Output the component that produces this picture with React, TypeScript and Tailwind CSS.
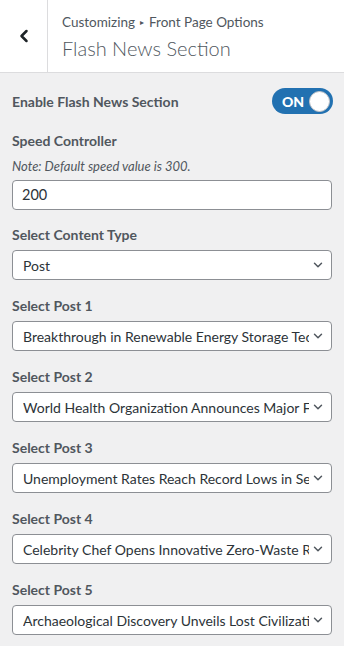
import { ChevronDown, ChevronLeft } from "lucide-react";

const posts = [
  "Breakthrough in Renewable Energy Storage Technology",
  "World Health Organization Announces Major Funding",
  "Unemployment Rates Reach Record Lows in Several States",
  "Celebrity Chef Opens Innovative Zero-Waste Restaurant",
  "Archaeological Discovery Unveils Lost Civilization",
];

const Label = ({ children }: { children: React.ReactNode }) => (
  <div className="text-[14px] font-bold text-[#50575e] leading-5 mb-[5px]">{children}</div>
);

const Select = ({ value }: { value: string }) => (
  <div className="flex items-center h-[30px] bg-white border border-[#8c8f94] rounded-[4px] pl-[10px] pr-[6px]">
    <span className="flex-1 text-[14px] text-[#2c3338] whitespace-nowrap overflow-hidden">{value}</span>
    <ChevronDown className="w-[14px] h-[14px] text-[#50575e] shrink-0 ml-[2px]" strokeWidth={2.5} />
  </div>
);

export default function App() {
  return (
    <div className="w-[344px] h-[646px] bg-[#f0f0f1] font-['Lato',sans-serif] overflow-hidden">
      <div className="flex h-[73px] bg-white border-b border-[#dcdcde]">
        <div className="w-[48px] border-r border-[#dcdcde] flex items-center justify-center">
          <ChevronLeft className="w-[20px] h-[20px] text-[#1d2327]" strokeWidth={3} />
        </div>
        <div className="pl-[14px] pt-[12px]">
          <div className="text-[13.5px] text-[#50575e] leading-5 flex items-center gap-[5px]">
            Customizing <span className="text-[8px]">▸</span> Front Page Options
          </div>
          <div className="text-[20px] font-light text-[#50575e] leading-7 mt-[2px]">Flash News Section</div>
        </div>
      </div>

      <div className="px-[12px] pt-[15px]">
        <div className="flex items-center justify-between">
          <div className="text-[14px] font-bold text-[#50575e]">Enable Flash News Section</div>
          <div className="w-[61px] h-[26px] rounded-full bg-[#2271b1] flex items-center justify-between pl-[10px] pr-[3px] mr-[-1px]">
            <span className="text-white text-[14px] font-black">ON</span>
            <span className="w-[21px] h-[21px] rounded-full bg-white border border-[#c3c4c7]" />
          </div>
        </div>

        <div className="mt-[17px] text-[14px] font-bold text-[#50575e] leading-5">Speed Controller</div>
        <div className="mt-[5px] text-[13px] italic text-[#50575e] leading-5">Note: Default speed value is 300.</div>
        <div className="mt-[4px] h-[30px] bg-white border border-[#8c8f94] rounded-[4px] px-[9px] flex items-center text-[14.5px] text-[#2c3338]">
          200
        </div>

        <div className="mt-[15px]">
          <Label>Select Content Type</Label>
          <Select value="Post" />
        </div>

        {posts.map((p, i) => (
          <div key={p} className="mt-[16px]">
            <Label>Select Post {i + 1}</Label>
            <Select value={p} />
          </div>
        ))}
      </div>
    </div>
  );
}
